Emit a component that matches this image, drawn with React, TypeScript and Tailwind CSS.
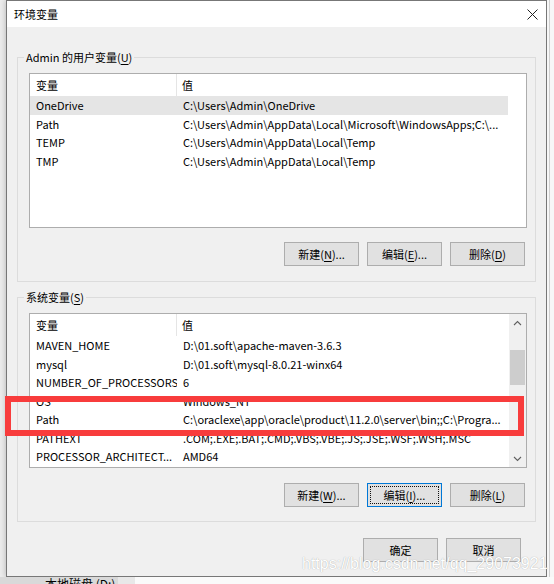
import React from "react";

type Row = [string, string];

const U = ({ c }: { c: string }) => <span className="underline underline-offset-[2px]">{c}</span>;

function Btn({ children, focused }: { children: React.ReactNode; focused?: boolean }) {
  return (
    <div
      className={
        focused
          ? "relative w-[75px] h-[24px] border border-[#0078d7] bg-[#e1e1e1] flex items-center justify-center"
          : "relative w-[75px] h-[24px] border border-[#adadad] bg-[#e1e1e1] flex items-center justify-center"
      }
    >
      {focused && <div className="absolute inset-[2px] border border-dotted border-[#111]" />}
      <span className="leading-[16px]">{children}</span>
    </div>
  );
}

function Chevron({ up }: { up?: boolean }) {
  return (
    <svg width="9" height="6" viewBox="0 0 9 6">
      <path
        d={up ? "M1 5 L4.5 1.5 L8 5" : "M1 1 L4.5 4.5 L8 1"}
        fill="none"
        stroke="#606060"
        strokeWidth="1.1"
      />
    </svg>
  );
}

function ListView({ rows, selected, scroll }: { rows: Row[]; selected?: number; scroll?: boolean }) {
  return (
    <div className="w-[498px] h-[155px] border border-[#adadad] bg-white flex overflow-hidden">
      <div className="flex flex-col w-[478px] shrink-0">
        <div className="h-[22px] flex shrink-0">
          <div className="w-[147px] border-r border-[#e5e5e5] pl-[6px] flex items-center leading-[16px]">变量</div>
          <div className="flex-1 pl-[5px] flex items-center leading-[16px]">值</div>
        </div>
        {rows.map((r, i) => (
          <div
            key={i}
            className={
              i === selected
                ? "h-[18.5px] flex items-center bg-[#e5e5e5] shrink-0"
                : "h-[18.5px] flex items-center shrink-0"
            }
          >
            <div className="w-[147px] pl-[6px] whitespace-nowrap overflow-hidden leading-[16px]">{r[0]}</div>
            <div className="flex-1 pl-[6px] whitespace-nowrap overflow-hidden leading-[16px]">{r[1]}</div>
          </div>
        ))}
      </div>
      <div className="flex-1" />
      {scroll && (
        <div className="w-[17px] shrink-0 bg-[#f0f0f0] flex flex-col">
          <div className="h-[17px] flex items-center justify-center">
            <Chevron up />
          </div>
          <div className="h-[19px]" />
          <div className="h-[35px] mx-[1px] bg-[#cdcdcd]" />
          <div className="flex-1" />
          <div className="h-[17px] flex items-center justify-center">
            <Chevron />
          </div>
        </div>
      )}
    </div>
  );
}

function Group({ label, children, pb }: { label: React.ReactNode; children: React.ReactNode; pb: string }) {
  return (
    <div className={"relative mx-[10px] border border-[#dcdcdc] pt-[15px] pl-[11px] pr-[8px] " + pb}>
      <div className="absolute top-[-9px] left-[6px] px-[2px] bg-[#f0f0f0] leading-[16px]">{label}</div>
      {children}
    </div>
  );
}

export default function App() {
  const userRows: Row[] = [
    ["OneDrive", "C:\\Users\\Admin\\OneDrive"],
    ["Path", "C:\\Users\\Admin\\AppData\\Local\\Microsoft\\WindowsApps;C:\\..."],
    ["TEMP", "C:\\Users\\Admin\\AppData\\Local\\Temp"],
    ["TMP", "C:\\Users\\Admin\\AppData\\Local\\Temp"],
  ];
  const sysRows: Row[] = [
    ["MAVEN_HOME", "D:\\01.soft\\apache-maven-3.6.3"],
    ["mysql", "D:\\01.soft\\mysql-8.0.21-winx64"],
    ["NUMBER_OF_PROCESSORS", "6"],
    ["OS", "Windows_NT"],
    ["Path", "C:\\oraclexe\\app\\oracle\\product\\11.2.0\\server\\bin;;C:\\Progra..."],
    ["PATHEXT", ".COM;.EXE;.BAT;.CMD;.VBS;.VBE;.JS;.JSE;.WSF;.WSH;.MSC"],
    ["PROCESSOR_ARCHITECT...", "AMD64"],
  ];

  return (
    <div className="relative w-[554px] h-[584px] overflow-hidden bg-[#f4f4f4] flex flex-col text-[11px] text-black font-['Noto_Sans_CJK_SC','Noto_Sans',sans-serif]">
      <div className="flex h-[577px] shrink-0">
        <div className="w-[6px] bg-[#ececec]" />
        <div className="w-[541px] h-[577px] border border-[#777777] bg-[#f0f0f0] flex flex-col shadow-[0_0_6px_rgba(0,0,0,0.25)]">
          <div className="h-[26px] bg-white flex items-center justify-between pl-[7px] pr-[8px] shrink-0">
            <span className="leading-[16px]">环境变量</span>
            <svg width="11" height="11" viewBox="0 0 11 11">
              <path d="M0.5 0.5 L10.5 10.5 M10.5 0.5 L0.5 10.5" stroke="#222" strokeWidth="1" />
            </svg>
          </div>

          <div className="mt-[30px]">
            <Group label={<>Admin 的用户变量(<U c="U" />)</>} pb="pb-[15px]">
              <ListView rows={userRows} selected={0} />
              <div className="mt-[14px] flex justify-end gap-[8px] pr-[2px]">
                <Btn>新建(<U c="N" />)...</Btn>
                <Btn>编辑(<U c="E" />)...</Btn>
                <Btn>删除(<U c="D" />)</Btn>
              </div>
            </Group>
          </div>

          <div className="mt-[15px]">
            <Group label={<>系统变量(<U c="S" />)</>} pb="pb-[14px]">
              <ListView rows={sysRows} scroll />
              <div className="mt-[15px] flex justify-end gap-[8px] pr-[2px]">
                <Btn>新建(<U c="W" />)...</Btn>
                <Btn focused>编辑(<U c="I" />)...</Btn>
                <Btn>删除(<U c="L" />)</Btn>
              </div>
            </Group>
          </div>

          <div className="mt-[16px] flex justify-end gap-[8px] pr-[25px]">
            <Btn>确定</Btn>
            <Btn>取消</Btn>
          </div>
        </div>
        <div className="flex-1 bg-[#f7f7f7] flex">
          <div className="w-[2px]" />
          <div className="w-[1px] bg-[#d0d0d0]" />
        </div>
      </div>

      <div className="h-[7px] flex overflow-hidden shrink-0">
        <div className="w-[118px] bg-[#d9d9d9] pl-[45px]">
          <div className="-mt-[1px] text-[12px] leading-[16px] whitespace-nowrap">本地磁盘 (D:)</div>
        </div>
        <div className="w-[17px] bg-[#e8e8e8]" />
        <div className="flex-1 bg-[#fafafa]" />
      </div>

      <div className="absolute left-[5px] top-[396px] w-[519px] h-[40px] border-[6px] border-[#f83c3c]" />

      <div className="absolute left-[302px] top-[555px] text-[16px] leading-[18px] whitespace-nowrap text-white font-['Liberation_Sans',Arial,sans-serif] [text-shadow:0_0_1px_#9a9a9a]">
        https://blog.csdn.net/qq_29073921
      </div>
    </div>
  );
}
